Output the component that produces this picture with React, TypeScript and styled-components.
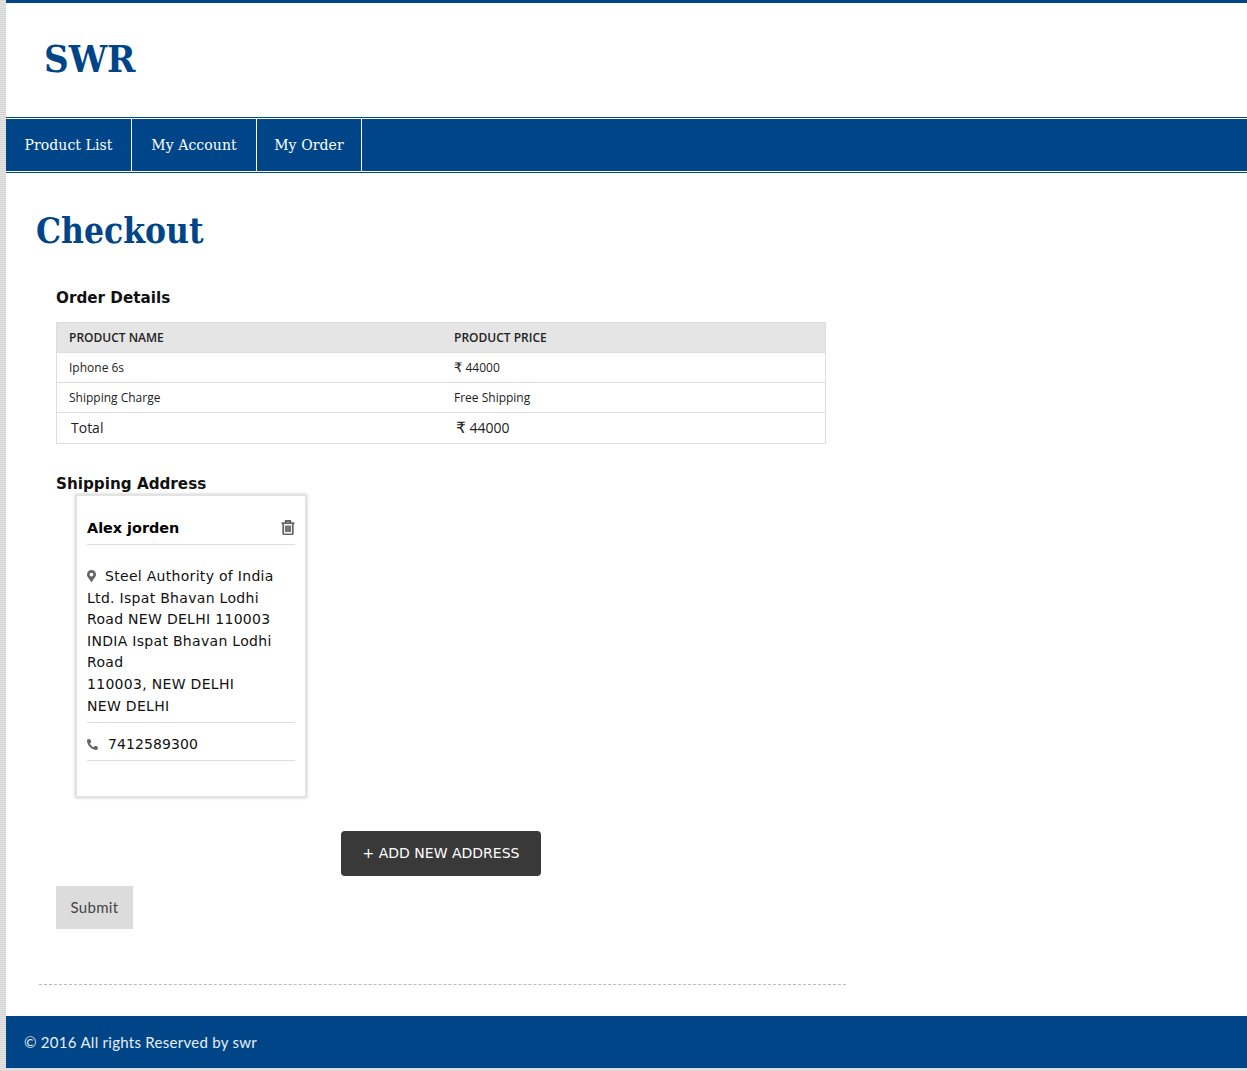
import { createGlobalStyle } from "styled-components";
import styled from "styled-components";
import { FaMapMarkerAlt, FaPhoneAlt } from "react-icons/fa";

const BLUE = "#004588";

const GlobalStyle = createGlobalStyle`
  html, body {
    margin: 0;
    padding: 0;
  }
  body {
    background: repeating-linear-gradient(0deg, #e4e4e4 0, #e4e4e4 1px, #d6d6d6 1px, #d6d6d6 2px);
  }
`;

const Page = styled.div`
  margin-left: 6px;
  height: 1068px;
  display: flex;
  flex-direction: column;
  background: #fff;
  border-top: 3px solid ${BLUE};
  box-sizing: border-box;
`;
const Header = styled.header`
  height: 114px;
  padding: 33px 0 0 38px;
  box-sizing: border-box;
`;
const Logo = styled.div`
  font-family: "DejaVu Serif Condensed", "DejaVu Serif", serif;
  font-stretch: condensed;
  font-weight: 700;
  font-size: 38px;
  line-height: 46px;
  color: ${BLUE};
`;
const Nav = styled.nav`
  display: flex;
  height: 56px;
  box-sizing: border-box;
  background: ${BLUE};
  border-top: 1px solid ${BLUE};
  border-bottom: 1px solid ${BLUE};
  box-shadow: inset 0 1px 0 #fff, inset 0 -1px 0 #fff;
`;
const NavItem = styled.a<{ $width: number }>`
  width: ${(p) => p.$width}px;
  margin-top: 1px;
  margin-bottom: 1px;
  border-right: 1px solid #fff;
  box-sizing: border-box;
  display: flex;
  align-items: center;
  justify-content: center;
  font-family: "DejaVu Serif", serif;
  font-size: 14px;
  letter-spacing: 0.1px;
  color: #fff;
`;
const Main = styled.main`
  flex: 1;
  padding: 0 0 0 30px;
`;
const PageTitle = styled.h1`
  margin: 35px 0 0;
  font-family: "DejaVu Serif Condensed", "DejaVu Serif", serif;
  font-stretch: condensed;
  font-weight: 700;
  font-size: 35px;
  line-height: 46px;
  color: ${BLUE};
`;
const Content = styled.div`
  width: 770px;
  margin-left: 20px;
`;
const SectionTitle = styled.h3<{ $top: number }>`
  margin: ${(p) => p.$top}px 0 0;
  font-family: "DejaVu Sans", sans-serif;
  font-weight: 700;
  font-size: 15.2px;
  line-height: 20px;
  color: #111;
`;
const Table = styled.div`
  margin-top: 14px;
  border: 1px solid #ddd;
  border-bottom: 0;
  font-family: "Open Sans", sans-serif;
  color: #222;
`;
const Row = styled.div<{ $head?: boolean; $large?: boolean }>`
  display: grid;
  grid-template-columns: 385px 1fr;
  height: ${(p) => (p.$large ? 31 : 30)}px;
  box-sizing: border-box;
  align-items: center;
  padding-left: ${(p) => (p.$large ? 14 : 12)}px;
  padding-bottom: ${(p) => (p.$large ? 2 : 0)}px;
  border-bottom: 1px solid #ddd;
  background: ${(p) => (p.$head ? "#e5e5e5" : "#fff")};
  font-size: ${(p) => (p.$large ? 14 : 12)}px;
  font-weight: ${(p) => (p.$head ? 600 : 400)};
`;
const Rupee = styled.span`
  font-family: "DejaVu Sans", sans-serif;
  font-size: 1.1em;
  line-height: 1;
`;
const AddressCard = styled.div`
  width: 232px;
  height: 304px;
  margin: 0 0 0 19px;
  box-sizing: border-box;
  padding: 11px 10px 0;
  border: 2px solid #e3e3e3;
  box-shadow: 0 0 3px rgba(0, 0, 0, 0.2);
  font-family: "DejaVu Sans", sans-serif;
  font-size: 14px;
  line-height: 21.6px;
  color: #111;
`;
const CardHead = styled.div`
  display: flex;
  align-items: center;
  justify-content: space-between;
  height: 38px;
  padding-top: 7px;
  box-sizing: border-box;
  border-bottom: 1px solid #ddd;
  color: #000;
`;
const Name = styled.span`
  font-size: 14.4px;
  font-weight: 700;
`;
const TrashIcon = styled.svg`
  width: 14px;
  height: 15px;
  margin-top: -4px;
  fill: none;
  stroke: #666;
  stroke-width: 1.8;
`;
const Lines = styled.div`
  padding: 21px 0 5px;
  border-bottom: 1px solid #ddd;
  letter-spacing: 0.3px;
`;
const PinIcon = styled(FaMapMarkerAlt)`
  width: 9px;
  height: 12px;
  margin-right: 9px;
  color: #666;
  vertical-align: -1px;
`;
const Phone = styled.div`
  height: 38px;
  padding-top: 6px;
  box-sizing: border-box;
  display: flex;
  align-items: center;
  gap: 10px;
  border-bottom: 1px solid #ddd;
  letter-spacing: 0.1px;
`;
const PhoneIcon = styled(FaPhoneAlt)`
  width: 11px;
  height: 11px;
  color: #666;
`;
const AddRow = styled.div`
  display: flex;
  justify-content: center;
  margin-top: 33px;
`;
const AddButton = styled.button`
  width: 200px;
  height: 45px;
  padding: 0 0 2px;
  border: 0;
  border-radius: 4px;
  background: #393939;
  color: #fff;
  font-family: "DejaVu Sans", sans-serif;
  font-size: 14px;
`;
const SubmitButton = styled.button`
  display: block;
  width: 77px;
  height: 43px;
  margin-top: 10px;
  padding: 0 0 2px;
  border: 0;
  background: #dcdcdc;
  color: #444;
  font-family: "Lato", sans-serif;
  font-size: 15px;
  letter-spacing: 0.3px;
`;
const Divider = styled.hr`
  width: 807px;
  margin: 55px 0 0 3px;
  border: 0;
  border-top: 1px dashed #bbb;
`;
const Footer = styled.footer`
  height: 52px;
  display: flex;
  align-items: center;
  padding-left: 18px;
  background: ${BLUE};
  color: #e8eef5;
  font-family: "Lato", sans-serif;
  font-size: 15px;
  letter-spacing: 0.28px;
`;

export default function App() {
  return (
    <>
      <GlobalStyle />
      <Page>
        <Header>
          <Logo>SWR</Logo>
        </Header>
        <Nav>
          <NavItem $width={126}>Product List</NavItem>
          <NavItem $width={125}>My Account</NavItem>
          <NavItem $width={105}>My Order</NavItem>
        </Nav>
        <Main>
          <PageTitle>Checkout</PageTitle>
          <Content>
            <SectionTitle $top={34}>Order Details</SectionTitle>
            <Table>
              <Row $head>
                <span>PRODUCT NAME</span>
                <span>PRODUCT PRICE</span>
              </Row>
              <Row>
                <span>Iphone 6s</span>
                <span>
                  <Rupee>₹</Rupee> 44000
                </span>
              </Row>
              <Row>
                <span>Shipping Charge</span>
                <span>Free Shipping</span>
              </Row>
              <Row $large>
                <span>Total</span>
                <span>
                  <Rupee>₹</Rupee> 44000
                </span>
              </Row>
            </Table>
            <SectionTitle $top={30}>Shipping Address</SectionTitle>
            <AddressCard>
              <CardHead>
                <Name>Alex jorden</Name>
                <TrashIcon viewBox="0 0 14 15">
                  <path d="M4.7 3V1h4.6v2M.5 3.2h13M2.2 3.2v10.1c0 .7.5 1 1 1h7.6c.5 0 1-.3 1-1V3.2M5 5.5v6.5M7 5.5v6.5M9 5.5v6.5" />
                </TrashIcon>
              </CardHead>
              <Lines>
                <PinIcon />
                Steel Authority of India Ltd. Ispat Bhavan Lodhi Road NEW DELHI 110003 INDIA Ispat Bhavan Lodhi Road
                <br />
                110003, NEW DELHI
                <br />
                NEW DELHI
              </Lines>
              <Phone>
                <PhoneIcon />
                7412589300
              </Phone>
            </AddressCard>
            <AddRow>
              <AddButton>+ ADD NEW ADDRESS</AddButton>
            </AddRow>
            <SubmitButton>Submit</SubmitButton>
          </Content>
          <Divider />
        </Main>
        <Footer>© 2016 All rights Reserved by swr</Footer>
      </Page>
    </>
  );
}
